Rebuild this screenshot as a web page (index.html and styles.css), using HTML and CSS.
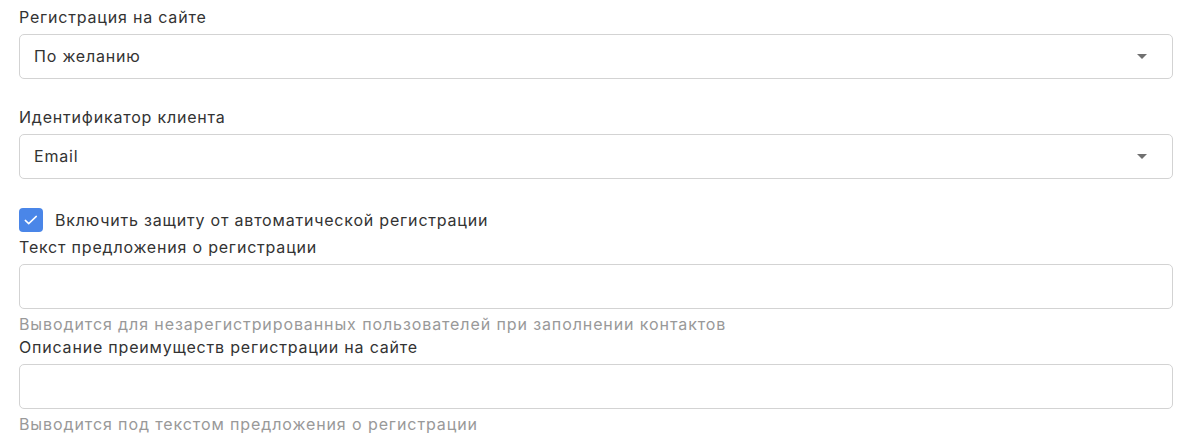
FILE: index.html
```html
<!DOCTYPE html>
<html lang="ru">
<head>
<meta charset="utf-8">
<link rel="stylesheet" href="styles.css">
</head>
<body>
<div class="form">
  <div class="field">
    <div class="label">Регистрация на сайте</div>
    <div class="select"><span>По желанию</span><span class="arrow"></span></div>
  </div>
  <div class="field">
    <div class="label">Идентификатор клиента</div>
    <div class="select"><span>Email</span><span class="arrow"></span></div>
  </div>
  <div class="check-row">
    <span class="checkbox"><svg width="24" height="24" viewBox="0 0 24 24"><path d="M6.3 12.4l3.4 3.2L17.3 8.4" fill="none" stroke="#fff" stroke-width="1.5" stroke-linecap="round" stroke-linejoin="round"/></svg></span>
    <span class="check-text">Включить защиту от автоматической регистрации</span>
  </div>
  <div class="group">
    <div class="label">Текст предложения о регистрации</div>
    <div class="input"></div>
    <div class="help">Выводится для незарегистрированных пользователей при заполнении контактов</div>
  </div>
  <div class="group">
    <div class="label">Описание преимуществ регистрации на сайте</div>
    <div class="input"></div>
    <div class="help">Выводится под текстом предложения о регистрации</div>
  </div>
</div>
</body>
</html>
```

FILE: styles.css
```css
html, body {
  margin: 0;
  padding: 0;
  background: #fff;
}
body {
  font-family: Inter, "Noto Sans", sans-serif;
  font-size: 16px;
  letter-spacing: 0.8px;
  color: #333;
}
.form {
  padding: 5px 11px 0 19px;
  display: flex;
  flex-direction: column;
}
.field {
  display: flex;
  flex-direction: column;
  gap: 5px;
  margin-bottom: 26px;
}
.label {
  line-height: 24px;
  height: 24px;
}
.select, .input {
  box-sizing: border-box;
  height: 45px;
  border: 1px solid #d3d3d3;
  border-radius: 5px;
  background: #fff;
}
.select {
  display: flex;
  align-items: center;
  justify-content: space-between;
  padding: 0 25px 2px 14px;
}
.arrow {
  width: 0;
  height: 0;
  margin-top: 2px;
  border-left: 5px solid transparent;
  border-right: 5px solid transparent;
  border-top: 5px solid #707070;
}
.check-row {
  display: flex;
  align-items: center;
  gap: 12px;
  height: 24px;
  margin-top: 3px;
  margin-bottom: 3px;
}
.checkbox {
  width: 24px;
  height: 24px;
  border-radius: 4px;
  background: #4a86e8;
  display: flex;
  align-items: center;
  justify-content: center;
}
.group {
  display: flex;
  flex-direction: column;
}
.group .input {
  margin-top: 5px;
}
.help {
  color: #999;
  letter-spacing: 0.9px;
  line-height: 24px;
  height: 24px;
  margin-top: 3px;
  margin-bottom: -1px;
}
```
